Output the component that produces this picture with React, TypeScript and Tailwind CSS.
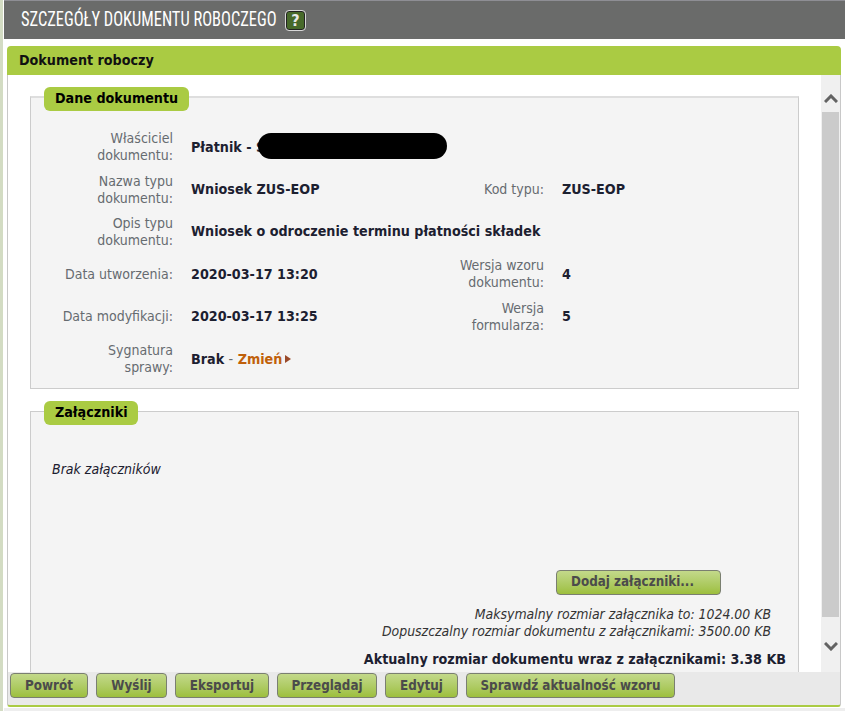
const labelCls = "text-right text-[14px] leading-[17px] text-[#666b70]";
const valueCls = "font-bold text-[14.2px] leading-[17px] text-[#1c2030]";

function Row({ label, value, label2, value2 }: { label: React.ReactNode; value: React.ReactNode; label2?: React.ReactNode; value2?: string }) {
  return (
    <div className="grid grid-cols-[142px_229px_1fr] items-center h-[42.4px]">
      <div className={labelCls}>{label}</div>
      <div className={`${valueCls} pl-[18px] whitespace-nowrap relative`}>{value}</div>
      <div className="flex items-center">
        <div className={`${labelCls} w-[142px] shrink-0`}>{label2}</div>
        {value2 && <div className={`${valueCls} pl-[18px]`}>{value2}</div>}
      </div>
    </div>
  );
}

function Legend({ children, w }: { children: React.ReactNode; w: string }) {
  return (
    <div className={`absolute left-[13px] -top-[11px] ${w} h-[24px] pl-[11px] rounded-[6px] bg-[#aacb43] text-[14.2px] font-bold leading-[23px] text-black whitespace-nowrap`}>
      {children}
    </div>
  );
}

function Btn({ children, w, extra = "" }: { children: React.ReactNode; w: string; extra?: string }) {
  return (
    <button className={`${w} ${extra} h-[25px] shrink-0 whitespace-nowrap rounded-[4px] border border-[#7a7f70] bg-gradient-to-b from-[#c3d98a] to-[#9dbf3c] text-[13.3px] font-bold leading-[22px] text-[#4b4b4b] text-center`}>
      {children}
    </button>
  );
}

export default function App() {
  return (
    <div className="w-[845px] h-[711px] overflow-hidden flex bg-white font-['DejaVu_Sans_Condensed','DejaVu_Sans',sans-serif] font-stretch-condensed">
      <div className="w-[3px] shrink-0 bg-[#d3dcc3]" />
      <div className="w-px shrink-0 bg-white" />
      <div className="flex-1 flex flex-col min-w-0">
        <div className="h-[39px] shrink-0 bg-[#6a6b6a] border-t border-[#8e8e94] flex items-center pl-[17px]">
          <span className="w-[256px] shrink-0 whitespace-nowrap text-white text-[21px] origin-left scale-x-[0.783] font-['Roboto',sans-serif]">SZCZEGÓŁY DOKUMENTU ROBOCZEGO</span>
          <span className="ml-[9px] w-[19px] h-[19px] rounded-[3px] border border-[#222] bg-[#47692a] text-[#e8e8e8] text-[16px] font-bold leading-[17px] text-center outline outline-1 outline-[#d8d8d8]">?</span>
        </div>
        <div className="flex-1 min-h-0 flex flex-col ml-[3px] mr-[4px] mt-[7px] rounded-t-[4px] overflow-hidden">
          <div className="h-[29px] shrink-0 bg-[#aacb43] pl-[12px] text-[14.2px] font-bold leading-[28px] text-[#111]">Dokument roboczy</div>
          <div className="flex-1 min-h-0 flex bg-white border-x border-[#c8c8c8]">
            <div className="flex-1 min-w-0 overflow-hidden pl-[22px] pr-[22px] pt-[21px]">
              <div className="relative h-[293px] border border-[#cccccc] border-t-2 border-t-[#dedede] bg-[#f4f4f4] pt-[28px]">
                <Legend w="w-[145px]">Dane dokumentu</Legend>
                <Row label={<>Właściciel<br />dokumentu:</>} value={<>Płatnik - S<span className="absolute left-[85px] -top-[6px] w-[189px] h-[26px] rounded-full bg-black" /></>} />
                <Row label={<>Nazwa typu<br />dokumentu:</>} value="Wniosek ZUS-EOP" label2="Kod typu:" value2="ZUS-EOP" />
                <Row label={<>Opis typu<br />dokumentu:</>} value="Wniosek o odroczenie terminu płatności składek" />
                <Row label="Data utworzenia:" value="2020-03-17 13:20" label2={<>Wersja wzoru<br />dokumentu:</>} value2="4" />
                <Row label="Data modyfikacji:" value="2020-03-17 13:25" label2={<>Wersja<br />formularza:</>} value2="5" />
                <Row
                  label={<>Sygnatura<br />sprawy:</>}
                  value={<>Brak <span className="font-normal text-[#666b70]">-</span> <span className="text-[#c0600a]">Zmień</span><span className="inline-block ml-[3px] align-[1px] w-0 h-0 border-y-[4px] border-y-transparent border-l-[6px] border-l-[#9a4a2a]" /></>}
                />
              </div>
              <div className="relative h-[300px] mt-[22px] border border-[#cccccc] bg-[#f4f4f4] flex flex-col">
                <Legend w="w-[94px]">Załączniki</Legend>
                <div className="pl-[21px] pt-[49px] text-[14px] leading-[17px] italic text-[#1c2030]">Brak załączników</div>
                <div className="mt-[91px] ml-[525px] w-[165px]">
                  <Btn w="w-[165px]" extra="pr-[12px]">Dodaj załączniki...</Btn>
                </div>
                <div className="mt-[11px] pr-[27px] text-right text-[13.9px] leading-[17px] italic text-[#333]">
                  <div>Maksymalny rozmiar załącznika to: 1024.00 KB</div>
                  <div>Dopuszczalny rozmiar dokumentu z załącznikami: 3500.00 KB</div>
                </div>
                <div className="mt-[11px] pr-[12px] text-right text-[14.2px] leading-[17px] font-bold text-[#1c2030]">Aktualny rozmiar dokumentu wraz z załącznikami: 3.38 KB</div>
              </div>
            </div>
            <div className="w-[19px] shrink-0 flex flex-col bg-[#f0f0f0] items-center">
              <div className="h-[37px] shrink-0 flex justify-center pt-[19px]">
                <svg width="14" height="9" viewBox="0 0 14 9"><path d="M1 8 L7 2 L13 8" fill="none" stroke="#636363" strokeWidth="3" /></svg>
              </div>
              <div className="w-[17px] h-[505px] shrink-0 bg-[#cbcbcb]" />
              <div className="flex-1 flex justify-center pt-[25px]">
                <svg width="14" height="9" viewBox="0 0 14 9"><path d="M1 1 L7 7 L13 1" fill="none" stroke="#636363" strokeWidth="3" /></svg>
              </div>
            </div>
          </div>
          <div className="h-[35px] shrink-0 flex items-start gap-[8px] pl-[2px] pt-[1px] bg-[#e9e9e9] border-x border-b-2 border-x-[#c8c8c8] border-b-[#aacb43] rounded-b-[3px]">
            <Btn w="w-[78px]">Powrót</Btn>
            <Btn w="w-[71px]">Wyślij</Btn>
            <Btn w="w-[94px]">Eksportuj</Btn>
            <Btn w="w-[100px]">Przeglądaj</Btn>
            <Btn w="w-[73px]">Edytuj</Btn>
            <Btn w="w-[209px]">Sprawdź aktualność wzoru</Btn>
          </div>
        </div>
        <div className="h-[4px] shrink-0 border-t border-white bg-[#eeeeee]" />
      </div>
    </div>
  );
}
